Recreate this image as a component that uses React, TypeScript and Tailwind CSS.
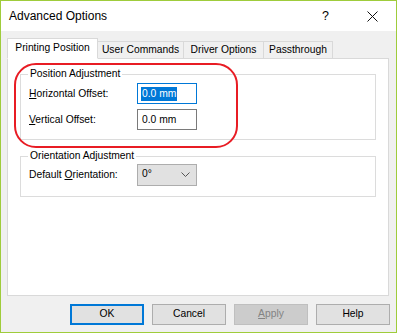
import React from 'react';

const font = { fontFamily: '"Liberation Sans", Arial, sans-serif' };

const TabButton = ({ label, active = false, w }: { label: string; active?: boolean; w: string }) => (
    <div
        className={
            active
                ? `${w} h-[21px] -mb-px relative z-10 bg-white border border-[#d9d9d9] border-b-white flex items-center justify-center pb-[1px]`
                : `${w} h-[17px] bg-[#f0f0f0] border border-[#d9d9d9] border-b-0 -ml-px flex items-center justify-center pt-[1px]`
        }
    >
        <span className="leading-none whitespace-nowrap">{label}</span>
    </div>
);

const Button = ({ children, variant = 'normal' }: { children: React.ReactNode; variant?: 'default' | 'normal' | 'disabled' }) => {
    const styles = {
        default: 'border-2 border-[#0078d7] bg-[#e1e1e1] text-black',
        normal: 'border border-[#adadad] bg-[#e1e1e1] text-black',
        disabled: 'border border-[#bfbfbf] bg-[#cccccc] text-[#838383]',
    };
    return (
        <div className={`w-[74px] h-[21px] flex items-center justify-center leading-none ${styles[variant]}`}>
            {children}
        </div>
    );
};

export default function App() {
    return (
        <div className="w-[397px] h-[333px] relative border border-[#9fcc3b] bg-[#f0f0f0] text-[10.3px] text-black overflow-hidden" style={font}>
            {/* title bar */}
            <div className="h-[30px] bg-white flex items-center">
                <span className="ml-[8px] text-[12px] leading-none">Advanced Options</span>
                <span className="ml-auto mr-[38px] text-[12.5px] leading-none">?</span>
                <svg className="mr-[18px]" width="11" height="11" viewBox="0 0 11 11">
                    <path d="M0.5 0.5 L10.5 10.5 M10.5 0.5 L0.5 10.5" stroke="#111" strokeWidth="1" />
                </svg>
            </div>

            {/* tabs */}
            <div className="ml-[6px] mt-[7px] flex items-end">
                <TabButton label="Printing Position" active w="w-[91px]" />
                <TabButton label="User Commands" w="w-[87px]" />
                <TabButton label="Driver Options" w="w-[81px]" />
                <TabButton label="Passthrough" w="w-[70px]" />
            </div>

            {/* tab panel */}
            <div className="ml-[6px] w-[382px] h-[238px] bg-white border border-[#d9d9d9] pt-[10px] px-[12px]">
                <fieldset className="border border-[#dcdcdc] p-0 m-0">
                    <legend className="ml-[7px] px-[2px] leading-none">Position Adjustment</legend>
                    <div className="pl-[8px] pt-[4px] pb-[9px] flex flex-col gap-[5px]">
                        <div className="flex items-center">
                            <span className="w-[108px]">
                                <span className="underline">H</span>orizontal Offset:
                            </span>
                            <div className="w-[60px] h-[21px] border border-[#0078d7] flex items-center pl-[3px]">
                                <span className="bg-[#0078d7] text-white leading-[14px] px-[1px]">0.0 mm</span>
                            </div>
                        </div>
                        <div className="flex items-center">
                            <span className="w-[108px]">
                                <span className="underline">V</span>ertical Offset:
                            </span>
                            <div className="w-[60px] h-[21px] border border-[#7a7a7a] flex items-center pl-[4px]">
                                <span className="leading-none">0.0 mm</span>
                            </div>
                        </div>
                    </div>
                </fieldset>

                <fieldset className="border border-[#dcdcdc] p-0 mt-[11px]">
                    <legend className="ml-[7px] px-[2px] leading-none">Orientation Adjustment</legend>
                    <div className="pl-[8px] pt-[2px] pb-[10px] flex items-center">
                        <span className="w-[108px]">
                            Default <span className="underline">O</span>rientation:
                        </span>
                        <div className="w-[60px] h-[22px] border border-[#adadad] bg-[#e1e1e1] flex items-center pl-[4px] pr-[6px]">
                            <span className="leading-none">0°</span>
                            <svg className="ml-auto" width="9" height="5" viewBox="0 0 9 5">
                                <path d="M0.5 0.5 L4.5 4.5 L8.5 0.5" fill="none" stroke="#555" strokeWidth="1" />
                            </svg>
                        </div>
                    </div>
                </fieldset>
            </div>

            {/* buttons */}
            <div className="mt-[8px] flex justify-end gap-[8px] mr-[6px]">
                <Button variant="default">OK</Button>
                <Button>Cancel</Button>
                <Button variant="disabled">
                    <span>
                        <span className="underline">A</span>pply
                    </span>
                </Button>
                <Button>Help</Button>
            </div>

            {/* red annotation oval */}
            <div className="absolute left-[13px] top-[62px] w-[224px] h-[85px] border-2 border-[#e81c24] rounded-[22px] pointer-events-none" />
        </div>
    );
}
